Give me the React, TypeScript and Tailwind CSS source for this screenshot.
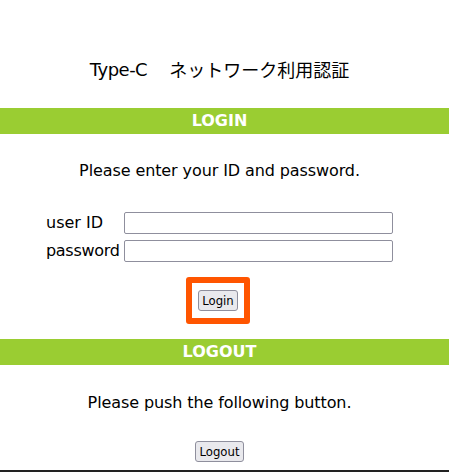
export default function App() {
  const font = { fontFamily: '"DejaVu Sans", "Noto Sans CJK JP", sans-serif' };
  const btn = { fontFamily: '"DejaVu Sans Condensed", "DejaVu Sans", sans-serif' };
  return (
    <div className="w-[449px] h-[472px] bg-white text-black overflow-hidden" style={font}>
      <h1 className="mt-[56px] flex h-[26px] items-center justify-center pr-[10px] text-[18px] font-normal tracking-[-0.5px]">
        <span>Type-C</span>
        <span className="ml-[22px] tracking-normal" style={{ fontFamily: '"Noto Sans CJK JP", sans-serif' }}>
          ネットワーク利用認証
        </span>
      </h1>

      {/* login */}
      <div className="mt-[26px] h-[26px] bg-[#9acd32] pr-[10px] text-center text-[16px] font-bold leading-[26px] text-white">
        LOGIN
      </div>
      <p className="mt-[25px] h-[24px] pr-[10px] text-center text-[16px] leading-[24px] tracking-[-0.1px]">
        Please enter your ID and password.
      </p>
      <div className="mt-[29px] flex flex-col gap-[6px] pl-[46px]">
        <div className="flex h-[22px] items-center">
          <label className="w-[78px] text-[16px] leading-[22px]">user ID</label>
          <input className="h-[22px] w-[269px] rounded-[2px] border border-[#8f8f9d] bg-white" />
        </div>
        <div className="flex h-[22px] items-center">
          <label className="w-[78px] text-[16px] leading-[22px] tracking-[-0.3px]">password</label>
          <input type="password" className="h-[22px] w-[269px] rounded-[2px] border border-[#8f8f9d] bg-white" />
        </div>
      </div>
      <div className="mt-[15px] flex justify-center pr-[13px]">
        <div className="rounded-[3px] border-[6px] border-[#ff5500] px-[6px] py-[7px]">
          <button
            className="block h-[21px] w-[40px] rounded-[3px] border border-[#8f8f9d] bg-[#e9e9ed] text-[13px] leading-[19px]"
            style={btn}
          >
            Login
          </button>
        </div>
      </div>

      {/* logout */}
      <div className="mt-[15px] h-[26px] bg-[#9acd32] pr-[10px] text-center text-[16px] font-bold leading-[26px] text-white">
        LOGOUT
      </div>
      <p className="mt-[26px] h-[24px] pr-[10px] text-center text-[16px] leading-[24px] tracking-[-0.1px]">
        Please push the following button.
      </p>
      <div className="mt-[26px] flex h-[21px] justify-center pr-[10px]">
        <button
          className="block h-[21px] w-[49px] rounded-[3px] border border-[#8f8f9d] bg-[#e9e9ed] text-[13px] leading-[19px]"
          style={btn}
        >
          Logout
        </button>
      </div>
      <div className="mt-[8px] h-[2px] bg-[#222]" />
    </div>
  );
}
